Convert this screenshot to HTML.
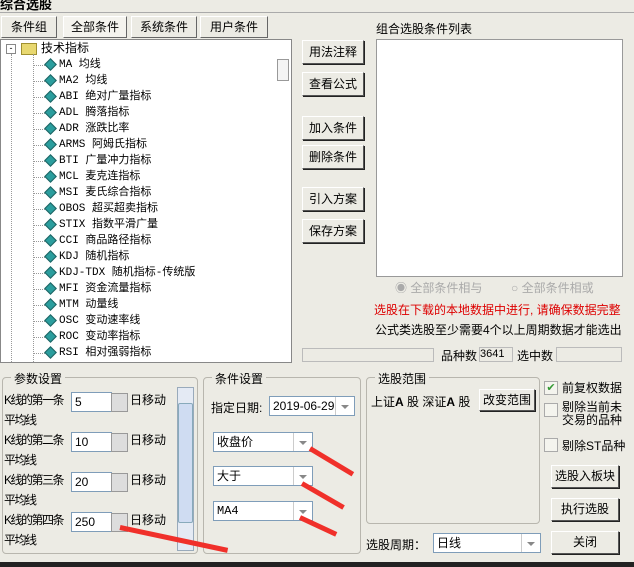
<html><head><style>
body{margin:0;width:634px;height:567px;background:#ecebe4;font-family:"Liberation Sans","Noto Sans CJK SC",sans-serif;font-size:12px;position:relative;overflow:hidden;color:#000}
.a{position:absolute;white-space:nowrap}
.btn{position:absolute;background:#ecebe4;border:1px solid;border-color:#fff #555 #555 #fff;box-shadow:1px 1px 0 #222;text-align:center;font-size:12px}
.tab{position:absolute;top:16px;height:20px;line-height:20px;border:1px solid;border-color:#fff #666 #666 #fff;text-align:center;font-size:12px}
.tree div{height:16px;line-height:16px;font-family:"Liberation Mono","Noto Sans CJK SC",monospace;font-size:11px;position:relative;padding-left:58px}
.tree div:before{content:"";position:absolute;left:32px;top:8px;width:12px;border-top:1px dotted #999}
.tree div:after{content:"";position:absolute;left:45px;top:3px;width:7px;height:7px;background:#2a9d9d;transform:rotate(45deg);border:1px solid #1d6060}
.grp{position:absolute;border:1px solid #b8b6ae;border-radius:4px}
.gl{position:absolute;top:-8px;left:8px;background:#ecebe4;padding:0 3px}
.inp{position:absolute;background:#fff;border:1px solid #7f9db9;height:18px;line-height:18px;padding-left:3px;font-size:12px}
.dd{position:absolute;right:0;top:0;width:18px;height:100%;border-left:1px solid #ccc;background:#fff}
.dd:after{content:"";position:absolute;left:5px;top:8px;border:4px solid transparent;border-top:4px solid #888}
.cb{position:absolute;width:12px;height:12px;border:1px solid #aaa;background:#f4f4ee}
.arrow{position:absolute;height:5px;background:#f0302a;transform-origin:0 50%}
.lb{position:absolute;left:4px;font-size:12px;letter-spacing:-1.5px}
</style></head><body>
<div class="a" style="left:0;top:-6px;font-weight:bold;font-size:13px">综合选股</div>
<div class="a" style="left:0;top:12px;width:634px;border-top:1px solid #aaa"></div>
<div class="tab" style="left:1px;width:54px">条件组</div>
<div class="tab" style="left:63px;width:62px;background:#f4f3ee">全部条件</div>
<div class="tab" style="left:131px;width:64px">系统条件</div>
<div class="tab" style="left:200px;width:66px">用户条件</div>
<div class="a" style="left:0;top:39px;width:290px;height:322px;background:#fff;border:1px solid #888;overflow:hidden">
<div class="a" style="left:5px;top:4px;width:8px;height:8px;border:1px solid #888;font-size:9px;line-height:7px;text-align:center">-</div>
<div class="a" style="left:20px;top:3px;width:14px;height:10px;background:#e8d870;border:1px solid #a09030"></div>
<div class="a" style="left:40px;top:0;line-height:16px">技术指标</div>
<div class="a" style="left:10px;top:14px;height:310px;border-left:1px dotted #999"></div>
<div class="a" style="left:32px;top:14px;height:310px;border-left:1px dotted #999"></div>
<div class="tree" style="position:absolute;left:0;top:17px;width:270px">
<div>MA 均线</div><div>MA2 均线</div><div>ABI 绝对广量指标</div><div>ADL 腾落指标</div><div>ADR 涨跌比率</div><div>ARMS 阿姆氏指标</div><div>BTI 广量冲力指标</div><div>MCL 麦克连指标</div><div>MSI 麦氏综合指标</div><div>OBOS 超买超卖指标</div><div>STIX 指数平滑广量</div><div>CCI 商品路径指标</div><div>KDJ 随机指标</div><div>KDJ-TDX 随机指标-传统版</div><div>MFI 资金流量指标</div><div>MTM 动量线</div><div>OSC 变动速率线</div><div>ROC 变动率指标</div><div>RSI 相对强弱指标</div>
</div>
<div class="a" style="left:276px;top:19px;width:10px;height:20px;border:1px solid #999;background:#f4f4f4"></div>
</div>
<div class="btn" style="left:302px;top:40px;width:60px;height:22px;line-height:22px">用法注释</div>
<div class="btn" style="left:302px;top:72px;width:60px;height:22px;line-height:22px">查看公式</div>
<div class="btn" style="left:302px;top:116px;width:60px;height:22px;line-height:22px">加入条件</div>
<div class="btn" style="left:302px;top:145px;width:60px;height:22px;line-height:22px">删除条件</div>
<div class="btn" style="left:302px;top:187px;width:60px;height:22px;line-height:22px">引入方案</div>
<div class="btn" style="left:302px;top:219px;width:60px;height:22px;line-height:22px">保存方案</div>
<div class="a" style="left:376px;top:20px">组合选股条件列表</div>
<div class="a" style="left:376px;top:39px;width:245px;height:236px;background:#fff;border:1px solid #999"></div>
<div class="a" style="left:395px;top:279px;color:#aaa">◉ 全部条件相与</div>
<div class="a" style="left:511px;top:279px;color:#aaa">○ 全部条件相或</div>
<div class="a" style="left:374px;top:301px;color:#d00">选股在下载的本地数据中进行, 请确保数据完整</div>
<div class="a" style="left:375px;top:321px">公式类选股至少需要4个以上周期数据才能选出</div>
<div class="a" style="left:302px;top:348px;width:130px;height:12px;border:1px solid #bbb"></div>
<div class="a" style="left:441px;top:347px">品种数</div>
<div class="a" style="left:479px;top:347px;width:32px;height:13px;border:1px solid #bbb;font-size:11px;line-height:13px">3641</div>
<div class="a" style="left:517px;top:347px">选中数</div>
<div class="a" style="left:556px;top:347px;width:64px;height:13px;border:1px solid #bbb"></div>
<div class="grp" style="left:2px;top:377px;width:194px;height:175px"><span class="gl">参数设置</span></div>
<div class="lb" style="top:391px">K线的第一条</div><div class="lb" style="top:411px">平均线</div>
<div class="lb" style="top:431px">K线的第二条</div><div class="lb" style="top:451px">平均线</div>
<div class="lb" style="top:471px">K线的第三条</div><div class="lb" style="top:491px">平均线</div>
<div class="lb" style="top:511px">K线的第四条</div><div class="lb" style="top:531px">平均线</div>
<div class="a" style="left:130px;top:391px">日移动</div>
<div class="a" style="left:130px;top:431px">日移动</div>
<div class="a" style="left:130px;top:471px">日移动</div>
<div class="a" style="left:130px;top:511px">日移动</div>
<div class="inp" style="left:71px;top:392px;width:36px">5</div>
<div class="inp" style="left:71px;top:432px;width:36px">10</div>
<div class="inp" style="left:71px;top:472px;width:36px">20</div>
<div class="inp" style="left:71px;top:512px;width:36px">250</div>
<div class="a" style="left:111px;top:393px;width:15px;height:17px;background:#ddd;border:1px solid #999"></div>
<div class="a" style="left:111px;top:433px;width:15px;height:17px;background:#ddd;border:1px solid #999"></div>
<div class="a" style="left:111px;top:473px;width:15px;height:17px;background:#ddd;border:1px solid #999"></div>
<div class="a" style="left:111px;top:513px;width:15px;height:17px;background:#ddd;border:1px solid #999"></div>
<div class="a" style="left:177px;top:387px;width:15px;height:162px;background:#e4eaf4;border:1px solid #9ab"></div>
<div class="a" style="left:178px;top:403px;width:13px;height:118px;background:#cfdcf2;border:1px solid #8ab;border-radius:2px"></div>
<div class="grp" style="left:203px;top:377px;width:156px;height:175px"><span class="gl">条件设置</span></div>
<div class="a" style="left:211px;top:399px">指定日期:</div>
<div class="inp" style="left:269px;top:396px;width:81px">2019-06-29<span class="dd"></span></div>
<div class="inp" style="left:213px;top:432px;width:95px">收盘价<span class="dd"></span></div>
<div class="inp" style="left:213px;top:466px;width:95px">大于<span class="dd"></span></div>
<div class="inp" style="left:213px;top:501px;width:95px;font-family:'Liberation Mono',monospace">MA4<span class="dd"></span></div>
<div class="grp" style="left:366px;top:377px;width:172px;height:145px"><span class="gl">选股范围</span></div>
<div class="a" style="left:371px;top:393px">上证<b>A</b> 股 深证<b>A</b> 股</div>
<div class="btn" style="left:479px;top:389px;width:54px;height:20px;line-height:20px">改变范围</div>
<div class="a" style="left:366px;top:536px">选股周期：</div>
<div class="inp" style="left:433px;top:533px;width:103px">日线<span class="dd"></span></div>
<div class="cb" style="left:544px;top:381px;color:#393;font-size:11px;line-height:12px;text-align:center">✔</div>
<div class="a" style="left:562px;top:379px">前复权数据</div>
<div class="cb" style="left:544px;top:403px"></div>
<div class="a" style="left:562px;top:401px;line-height:13px">剔除当前未<br>交易的品种</div>
<div class="cb" style="left:544px;top:438px"></div>
<div class="a" style="left:562px;top:437px">剔除ST品种</div>
<div class="btn" style="left:551px;top:465px;width:66px;height:21px;line-height:21px">选股入板块</div>
<div class="btn" style="left:551px;top:498px;width:66px;height:21px;line-height:21px">执行选股</div>
<div class="btn" style="left:551px;top:531px;width:66px;height:21px;line-height:21px">关闭</div>
<div class="a" style="left:0;top:562px;width:634px;height:5px;background:#222"></div>
<div class="arrow" style="left:310px;top:446px;width:50px;transform:rotate(31deg)"></div>
<div class="arrow" style="left:302px;top:481px;width:48px;transform:rotate(30deg)"></div>
<div class="arrow" style="left:300px;top:515px;width:40px;transform:rotate(25deg)"></div>
<div class="arrow" style="left:120px;top:525px;width:110px;transform:rotate(12deg)"></div>
</body></html>
